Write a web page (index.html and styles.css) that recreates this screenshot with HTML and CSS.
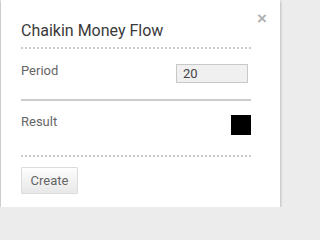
FILE: index.html
```html
<!DOCTYPE html>
<html>
<head>
<meta charset="utf-8">
<link rel="stylesheet" href="styles.css">
</head>
<body>
<div class="page">
  <div class="dialog">
    <span class="close">&times;</span>
    <div class="content">
      <h1 class="title">Chaikin Money Flow</h1>
      <div class="row row-period">
        <span class="label">Period</span>
        <div class="input">20</div>
      </div>
      <div class="row row-result">
        <span class="label">Result</span>
        <div class="swatch"></div>
      </div>
      <div class="footer">
        <button class="btn">Create</button>
      </div>
    </div>
  </div>
</div>
</body>
</html>
```
FILE: styles.css
```css
html, body {
  margin: 0;
  padding: 0;
  background: #ececec;
  font-family: Roboto, "Liberation Sans", Arial, sans-serif;
}
.page {
  padding-left: 1px;
  width: 279px;
}
.dialog {
  position: relative;
  width: 279px;
  height: 207px;
  background: #fff;
  box-shadow: 0 1px 3px rgba(0, 0, 0, 0.35);
}
.close {
  position: absolute;
  right: 13px;
  top: 9px;
  font-family: "Liberation Sans", Arial, sans-serif;
  font-size: 17px;
  font-weight: bold;
  line-height: 20px;
  color: #b0b0b0;
}
.content {
  padding: 0 29px 0 20px;
}
.title {
  margin: 0;
  padding: 21px 0 6px;
  font-size: 16px;
  line-height: 20px;
  font-weight: normal;
  color: #3a3a3a;
  border-bottom: 2px dotted #ccc;
}
.row {
  display: flex;
  justify-content: space-between;
  align-items: flex-start;
}
.label {
  font-size: 13px;
  line-height: 16px;
  color: #666;
}
.row-period {
  padding: 14px 0 16px;
  border-bottom: 2px solid #ccc;
}
.input {
  margin-top: 1px;
  margin-right: 3px;
  box-sizing: border-box;
  width: 72px;
  height: 19px;
  padding-left: 6px;
  border: 1px solid #c8c8c8;
  background: #f0f0f0;
  font-size: 13px;
  line-height: 17px;
  color: #444;
}
.row-result {
  padding: 13px 0 20px;
  border-bottom: 2px dotted #ccc;
}
.swatch {
  margin-top: 1px;
  width: 20px;
  height: 20px;
  background: #000;
}
.footer {
  padding-top: 10px;
}
.btn {
  box-sizing: border-box;
  width: 57px;
  height: 27px;
  margin: 0;
  padding: 0;
  border: 1px solid #dcdcdc;
  border-radius: 1px;
  background: linear-gradient(#fdfdfd, #e8e8e8);
  font-family: Roboto, "Liberation Sans", Arial, sans-serif;
  font-size: 13px;
  color: #666;
}
```
